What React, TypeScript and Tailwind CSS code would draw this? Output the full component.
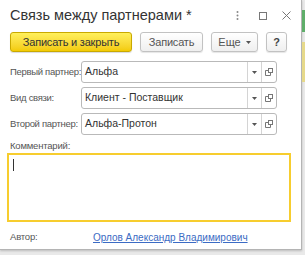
import React from 'react'

const font = { fontFamily: '"Liberation Sans", Arial, sans-serif' }

function Field({ label, value }: { label: string; value: string }) {
  return (
    <div className="flex h-[22px] items-center whitespace-nowrap">
      <div className="w-[81px] pl-[10px] text-[9.5px] tracking-[-0.3px] text-[#555]">{label}</div>
      <div className="flex h-full w-[196px] items-center rounded-[3px] border border-[#b9b9b9] bg-white">
        <div className="flex-1 pl-[3px] text-[10.5px] text-[#333]">{value}</div>
        <div className="flex h-full w-[14px] items-center justify-center border-l border-[#d4d4d4]">
          <svg width="5" height="3" viewBox="0 0 5 3">
            <path d="M0 0h5L2.5 3z" fill="#555" />
          </svg>
        </div>
        <div className="flex h-full w-[15px] items-center justify-center border-l border-[#d4d4d4]">
          <svg width="8" height="8" viewBox="0 0 8 8" fill="none" stroke="#777" strokeWidth="1">
            <rect x="3.5" y="0.5" width="4" height="4" />
            <path d="M3.5 2.5h-3v5h5v-3" />
          </svg>
        </div>
      </div>
    </div>
  )
}

export default function App() {
  return (
    <div className="flex h-[255px] w-[305px] bg-[#e9e9e9]" style={font}>
      <div className="flex h-[250px] w-[302px] flex-col border-r border-b border-[#b4b4b4] bg-white shadow-[0_1px_2px_rgba(0,0,0,0.2)]">
        <div className="flex h-[28px] items-center pl-[10px] pt-[3px]">
          <div className="flex-1 whitespace-nowrap text-[14.5px] text-[#333]">Связь между партнерами *</div>
          <div className="flex items-center">
            <svg width="3" height="9" viewBox="0 0 3 9" className="mr-[20px]">
              <circle cx="1.5" cy="1" r="1" fill="#888" />
              <circle cx="1.5" cy="4.5" r="1" fill="#888" />
              <circle cx="1.5" cy="8" r="1" fill="#888" />
            </svg>
            <svg width="8" height="8" viewBox="0 0 8 8" className="mr-[15px]">
              <rect x="0.5" y="0.5" width="7" height="7" fill="none" stroke="#777" />
            </svg>
            <svg width="9" height="9" viewBox="0 0 9 9" className="mr-[10px]">
              <path d="M0.5 0.5l8 8M8.5 0.5l-8 8" stroke="#777" strokeWidth="1" />
            </svg>
          </div>
        </div>

        <div className="mt-[4px] flex h-[20px] gap-[8px] whitespace-nowrap pl-[10px]">
          <button className="w-[122px] rounded-[3px] border border-[#c9a900] bg-gradient-to-b from-[#fff05a] to-[#f3cb00] text-[11px] tracking-[-0.2px] text-[#333] shadow-[0_1px_1px_rgba(0,0,0,0.15)]">
            Записать и закрыть
          </button>
          <button className="w-[63px] rounded-[3px] border border-[#c2c2c2] bg-gradient-to-b from-white to-[#efefef] text-[11px] tracking-[-0.2px] text-[#555] shadow-[0_1px_1px_rgba(0,0,0,0.1)]">
            Записать
          </button>
          <button className="flex w-[47px] items-center justify-center gap-[5px] rounded-[3px] border border-[#c2c2c2] bg-gradient-to-b from-white to-[#efefef] text-[11px] text-[#555] shadow-[0_1px_1px_rgba(0,0,0,0.1)]">
            Еще
            <svg width="5" height="3" viewBox="0 0 5 3">
              <path d="M0 0h5L2.5 3z" fill="#555" />
            </svg>
          </button>
          <button className="w-[21px] rounded-[3px] border border-[#c2c2c2] bg-gradient-to-b from-white to-[#efefef] text-[11px] font-bold text-[#444] shadow-[0_1px_1px_rgba(0,0,0,0.1)]">
            ?
          </button>
        </div>

        <div className="mt-[9px] flex flex-col gap-[4px]">
          <Field label="Первый партнер:" value="Альфа" />
          <Field label="Вид связи:" value="Клиент - Поставщик" />
          <Field label="Второй партнер:" value="Альфа-Протон" />
        </div>

        <div className="mt-[4px] h-[14px] pl-[10px] text-[9.5px] leading-[14px] tracking-[-0.2px] text-[#555]">Комментарий:</div>
        <div className="ml-[7px] h-[69px] w-[284px] border-2 border-[#f7cd2e] bg-white pl-[4px] pt-[4px]">
          <div className="h-[12px] w-px bg-[#333]" />
        </div>

        <div className="mt-[7px] flex h-[16px] items-center whitespace-nowrap">
          <div className="w-[93px] pl-[10px] text-[9.5px] tracking-[-0.2px] text-[#555]">Автор:</div>
          <a className="text-[10px] text-[#3b6bc4] underline">Орлов Александр Владимирович</a>
        </div>
      </div>
      <div className="flex flex-1 flex-col">
        <div className="h-[10px]" />
        <div className="h-[22px] bg-[#5fae6a]" />
        <div className="h-[10px]" />
        <div className="h-[40px] bg-[#e6d98a]" />
      </div>
    </div>
  )
}
